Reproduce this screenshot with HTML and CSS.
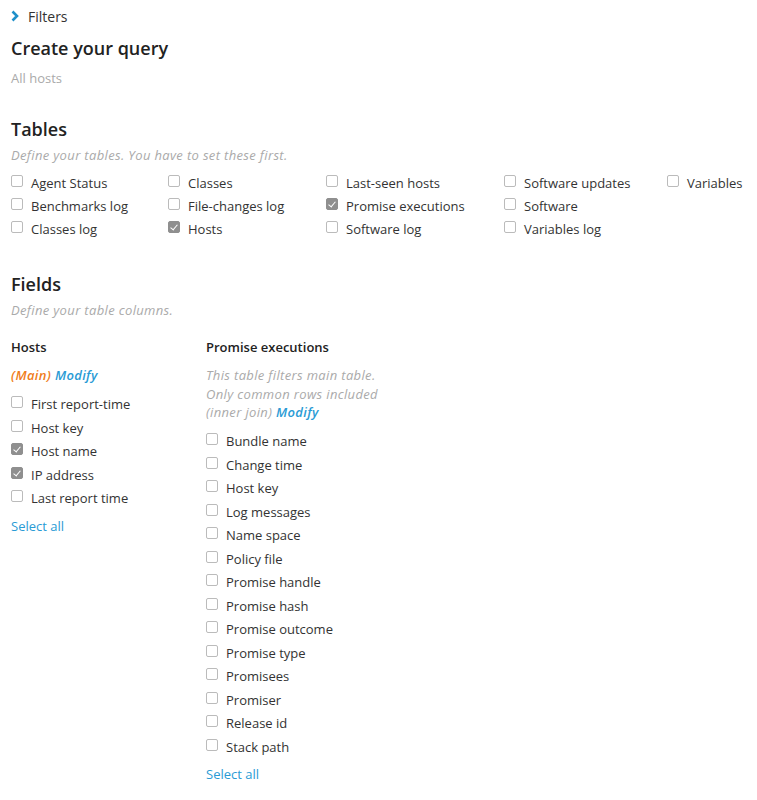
FILE: index.html
```html
<!DOCTYPE html>
<html>
<head>
<meta charset="utf-8">
<link rel="stylesheet" href="styles.css">
</head>
<body>
<div class="page">
  <div class="filters-toggle">
    <svg class="chev" width="8" height="12" viewBox="0 0 8 12"><path d="M1.5 1.5 L6 6 L1.5 10.5" fill="none" stroke="#1f8fc9" stroke-width="2.6"/></svg>
    <span>Filters</span>
  </div>
  <h1 class="title">Create your query</h1>
  <div class="subtle">All hosts</div>

  <h2 class="section">Tables</h2>
  <div class="hint">Define your tables. You have to set these first.</div>
  <div class="tables-grid">
    <div class="tcol c1">
      <label class="cb"><span class="box"></span>Agent Status</label>
      <label class="cb"><span class="box"></span>Benchmarks log</label>
      <label class="cb"><span class="box"></span>Classes log</label>
    </div>
    <div class="tcol c2">
      <label class="cb"><span class="box"></span>Classes</label>
      <label class="cb"><span class="box"></span>File-changes log</label>
      <label class="cb"><span class="box checked"></span>Hosts</label>
    </div>
    <div class="tcol c3">
      <label class="cb"><span class="box"></span>Last-seen hosts</label>
      <label class="cb"><span class="box checked"></span>Promise executions</label>
      <label class="cb"><span class="box"></span>Software log</label>
    </div>
    <div class="tcol c4">
      <label class="cb"><span class="box"></span>Software updates</label>
      <label class="cb"><span class="box"></span>Software</label>
      <label class="cb"><span class="box"></span>Variables log</label>
    </div>
    <div class="tcol c5">
      <label class="cb"><span class="box"></span>Variables</label>
    </div>
  </div>

  <h2 class="section fields">Fields</h2>
  <div class="hint">Define your table columns.</div>

  <div class="fields-grid">
    <div class="fcol left">
      <div class="fhead">Hosts</div>
      <div class="meta"><span class="main">(Main)</span> <a class="modify">Modify</a></div>
      <div class="flist">
        <label class="cb"><span class="box"></span>First report-time</label>
        <label class="cb"><span class="box"></span>Host key</label>
        <label class="cb"><span class="box checked"></span>Host name</label>
        <label class="cb"><span class="box checked"></span>IP address</label>
        <label class="cb"><span class="box"></span>Last report time</label>
      </div>
      <a class="select-all">Select all</a>
    </div>
    <div class="fcol right">
      <div class="fhead">Promise executions</div>
      <div class="meta note">This table filters main table.<br>Only common rows included<br>(inner join) <a class="modify">Modify</a></div>
      <div class="flist">
        <label class="cb"><span class="box"></span>Bundle name</label>
        <label class="cb"><span class="box"></span>Change time</label>
        <label class="cb"><span class="box"></span>Host key</label>
        <label class="cb"><span class="box"></span>Log messages</label>
        <label class="cb"><span class="box"></span>Name space</label>
        <label class="cb"><span class="box"></span>Policy file</label>
        <label class="cb"><span class="box"></span>Promise handle</label>
        <label class="cb"><span class="box"></span>Promise hash</label>
        <label class="cb"><span class="box"></span>Promise outcome</label>
        <label class="cb"><span class="box"></span>Promise type</label>
        <label class="cb"><span class="box"></span>Promisees</label>
        <label class="cb"><span class="box"></span>Promiser</label>
        <label class="cb"><span class="box"></span>Release id</label>
        <label class="cb"><span class="box"></span>Stack path</label>
      </div>
      <a class="select-all">Select all</a>
    </div>
  </div>
</div>
</body>
</html>
```

FILE: styles.css
```css
html, body {
  margin: 0;
  padding: 0;
  background: #fff;
}
body {
  font-family: "Open Sans", "Lato", sans-serif;
  color: #333;
  font-size: 13px;
}
.page {
  padding: 6px 11px 0 11px;
}
.filters-toggle {
  display: flex;
  align-items: center;
  gap: 9px;
  height: 20px;
  font-size: 14px;
  color: #333;
}
.chev { display: block; }
.title {
  margin: 9px 0 0;
  font-size: 18px;
  font-weight: 600;
  line-height: 26px;
  color: #222;
}
.subtle {
  margin-top: 8px;
  color: #aaa;
  font-size: 13px;
  line-height: 18px;
}
.section {
  margin: 29px 0 0;
  font-size: 18px;
  font-weight: 600;
  line-height: 26px;
  color: #222;
}
.section.fields { margin-top: 30px; }
.hint {
  margin-top: 4px;
  font-style: italic;
  color: #aaa;
  font-size: 13px;
  line-height: 18px;
  letter-spacing: 0.35px;
}
.tables-grid {
  display: flex;
  margin-top: 7px;
}
.tcol { display: flex; flex-direction: column; }
.c1 { width: 157px; }
.c2 { width: 158px; }
.c3 { width: 178px; }
.c4 { width: 163px; }
.cb {
  display: flex;
  align-items: center;
  height: 23.5px;
  font-size: 13px;
  color: #333;
}
.tcol .cb { height: 23.3px; }
.box {
  width: 10px;
  height: 10px;
  border: 1px solid #bbb;
  border-radius: 2px;
  margin-right: 8px;
  flex: none;
  position: relative;
  top: -2px;
  background: #fff;
}
.box.checked {
  background: #8f8f8f;
  border-color: #8f8f8f;
}
.box.checked::after {
  content: "";
  position: absolute;
  left: 3px;
  top: 1px;
  width: 3px;
  height: 6px;
  border: solid #fff;
  border-width: 0 1.5px 1.5px 0;
  transform: rotate(40deg);
}
.fields-grid {
  display: flex;
  margin-top: 19.5px;
}
.fcol.left { width: 195px; }
.fhead {
  font-weight: 600;
  font-size: 13px;
  line-height: 18px;
  color: #222;
}
.meta {
  margin-top: 10px;
  font-style: italic;
  line-height: 18.5px;
  letter-spacing: 0.35px;
}
.main { color: #f07d1a; font-weight: 600; }
.modify { color: #2a9bd5; font-weight: 600; }
.note { color: #aaa; }
.flist { margin-top: 7.5px; display: flex; flex-direction: column; }
.select-all {
  display: block;
  margin-top: 7px;
  color: #2a9bd5;
  line-height: 18px;
}
```
